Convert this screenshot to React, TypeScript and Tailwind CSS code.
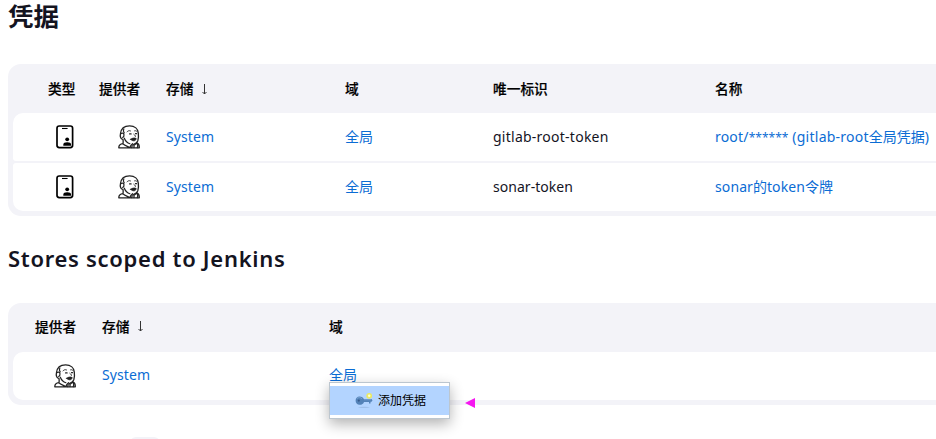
import type { ReactNode } from 'react';

function CredentialIcon() {
  return (
    <svg width="18" height="24" viewBox="0 0 18 24" fill="none" className="block">
      <rect x="1" y="1" width="15.600" height="21.600" rx="2.300" stroke="#000" strokeWidth="1.700" />
      <path d="M6 3.500h5.600" stroke="#000" strokeWidth="1.100" />
      <circle cx="11.200" cy="14.300" r="1.900" fill="#000" />
      <path d="M7.300 20.700v-1c0-1.800 1.500-2.500 3.900-2.500s3.900.7 3.900 2.500v1z" fill="#000" />
    </svg>
  );
}

function JenkinsIcon() {
  return (
    <svg width="22" height="24" viewBox="0 0 22 24" fill="none" stroke="#222" strokeLinecap="round" strokeLinejoin="round" className="block">
      <path d="M4.200 14.300C2.500 13.200 2 10.900 2.500 8.600C3 3.600 6.600.8 11.600.8c5.200 0 8.500 3.100 8.700 7.300.3 2.200.2 5.500-.5 7.700-.6 1.600-1.700 2.700-3.200 3" strokeWidth="1.300" />
      <path d="M5.800 3.900c-.7 1.400-.5 2.700.4 3.900M3.100 8.500c1.200-.9 2.800-.2 2.900 1.300.1 1.400-.5 2.300-1.300 2.700M6.300 13.200c.9 2.300 2.600 4.600 5.600 5.500" strokeWidth="1.200" />
      <path d="M9 6.900c.9-1.200 2.200-1.600 3.500-1M16.600 5.800c.9-.3 1.600 0 2.200.6" strokeWidth=".9" />
      <path d="M11.600 8.900h1.500M17.500 8.700h1" strokeWidth="1.300" />
      <path d="M15.800 9.300c1.500 1.200 2.300 2 1.400 2.600" strokeWidth=".9" />
      <path d="M12.600 14.300c1.700-1.500 3.700-1.500 5.600-.8-.3 1.500-1 2.200-2.200 2.300-1.300.1-2.400-.5-3.400-1.500z" fill="#222" strokeWidth=".8" />
      <path d="M5 14.500c.2 1.500.3 3-.1 4.100M5 18.600c-2.700.2-4.200 1.600-4.200 4.200h20.500c.1-2.600-.5-4.200-2.500-4.900M5 18.900c1.500 1.700 4.200 2.300 6.900 3.700" strokeWidth="1.300" />
      <path d="M12 22.400c.3-1.500 1.200-3 2.500-3.700l1.500 1.600 2.600-2.100c1.300.6 1.400 3 .7 4.400M16 20.300v2.300M14.200 20.600l-.5 2" strokeWidth="1.300" />
    </svg>
  );
}

function KeyIcon() {
  return (
    <svg width="18" height="18" viewBox="0 0 18 18" className="block">
      <ellipse cx="9" cy="15.300" rx="6" ry=".6" fill="#7f9fc9" opacity=".4" />
      <path fillRule="evenodd" d="M4.600 4.400c2.200 0 3.600 1.100 4.200 2.700h7.700l1 1.300-1 1.300h-1v1.700h-1.500V9.900H9c-.5 1.800-2.100 2.900-4.400 2.900C2.100 12.800.6 11 .6 8.600s1.500-4.200 4-4.200z" fill="#5382b8" />
      <path d="M2 6.500c1.200-1.200 3.800-1.400 5 .4M9 7.700h7" fill="none" stroke="#7fa8d4" strokeWidth=".8" />
      <circle cx="3.800" cy="8.600" r="1.100" fill="#34588a" />
      <circle cx="14.200" cy="3.800" r="2.900" fill="#f4ed48" opacity=".85" />
      <circle cx="14.200" cy="3.800" r="1.200" fill="#fffedc" />
    </svg>
  );
}

function Down() {
  return (
    <svg width="7" height="13" viewBox="0 0 7 13" fill="none" stroke="#333" className="ml-[8px]">
      <path d="M3.500 1v10M1.500 9l2 2 2-2" strokeWidth="1" />
    </svg>
  );
}

function Link({ children }: { children: ReactNode }) {
  return <a className="text-[#0b6cd4]">{children}</a>;
}

function Latin({ children }: { children: ReactNode }) {
  return <span className="tracking-[0.1px]">{children}</span>;
}

function Head({ children, className }: { children: ReactNode; className: string }) {
  return <div className={`flex items-center text-[13.700px] font-medium text-black [-webkit-text-stroke:0.2px] ${className}`}>{children}</div>;
}

const credentials = [
  {
    id: <span className="tracking-[0.25px]">gitlab-root-token</span>,
    name: (
      <>
        <span className="tracking-[0.2px]">root/</span>
        <span className="text-[12px]">******</span>
        <span className="tracking-[0.25px]"> (gitlab-root</span>全局凭据<Latin>)</Latin>
      </>
    ),
  },
  {
    id: <span className="tracking-[0.04px]">sonar-token</span>,
    name: <><Latin>sonar</Latin>的<Latin>token</Latin>令牌</>,
  },
];

export default function App() {
  return (
    <main className="h-[439px] w-[936px] overflow-hidden bg-white pl-2 font-['Noto_Sans','Noto_Sans_CJK_SC',sans-serif] text-[14px] leading-5 text-[#14141f]">
      <h1 className="h-16 font-['Noto_Sans_CJK_SC',sans-serif] text-[25.500px] leading-[30px] font-bold">凭据</h1>

      <section className="h-[152px] rounded-l-[13px] bg-[#f3f3f8] pl-[5px]">
        <div className="grid h-[49px] grid-cols-[153px_179px_148px_222px_1fr] pt-px">
          <div className="flex pl-[35px]">
            <Head className="w-[51px]">类型</Head>
            <Head className="">提供者</Head>
          </div>
          <Head className="">存储<Down /></Head>
          <Head className="">域</Head>
          <Head className="">唯一标识</Head>
          <Head className="">名称</Head>
        </div>
        <div className="flex flex-col gap-[2px]">
          {credentials.map((item, index) => (
            <div
              key={index}
              className={`grid h-12 grid-cols-[153px_179px_148px_222px_1fr] items-center whitespace-nowrap bg-white ${index === 0 ? 'rounded-tl-[10px] rounded-bl-[3px]' : 'rounded-tl-[3px] rounded-bl-[10px]'}`}
            >
              <div className="flex pl-[43px]">
                <div className="w-[62px]"><CredentialIcon /></div>
                <JenkinsIcon />
              </div>
              <Link><Latin>System</Latin></Link>
              <Link>全局</Link>
              {item.id}
              <Link>{item.name}</Link>
            </div>
          ))}
        </div>
      </section>

      <h2 className="mt-[26px] mb-[29px] text-[22px] leading-8 font-semibold tracking-[0.7px]">Stores scoped to Jenkins</h2>

      <section className="h-[102px] rounded-l-[13px] bg-[#f3f3f8] pl-[5px]">
        <div className="grid h-[49px] grid-cols-[89px_227px_1fr] pb-[2px]">
          <Head className="pl-[22px]">提供者</Head>
          <Head className="">存储<Down /></Head>
          <Head className="">域</Head>
        </div>
        <div className="grid h-12 grid-cols-[89px_227px_1fr] items-center rounded-l-[10px] bg-white pb-[2px]">
          <div className="pl-[41px] pt-px"><JenkinsIcon /></div>
          <Link><Latin>System</Latin></Link>
          <div className="relative">
            <Link>全局</Link>
            <div className="absolute top-[17px] left-0 w-[121px] border border-[#bcc6cf] bg-white py-[3px] shadow-[0_5px_14px_rgba(0,0,0,0.3)]">
              <div className="flex h-[29px] items-center bg-[#b3d4ff] pl-[25px] text-[12px] text-black">
                <KeyIcon />
                <span className="ml-[5px]">添加凭据</span>
              </div>
            </div>
            <svg width="10" height="10" viewBox="0 0 10 10" className="absolute top-[33px] left-[136px]">
              <path d="M0 5 10 0v10z" fill="#f516f0" />
            </svg>
          </div>
        </div>
      </section>
      <div className="mt-8 ml-[122px] h-6 w-[30px] rounded-[6px] bg-[#f3f3f8]" />
    </main>
  );
}
